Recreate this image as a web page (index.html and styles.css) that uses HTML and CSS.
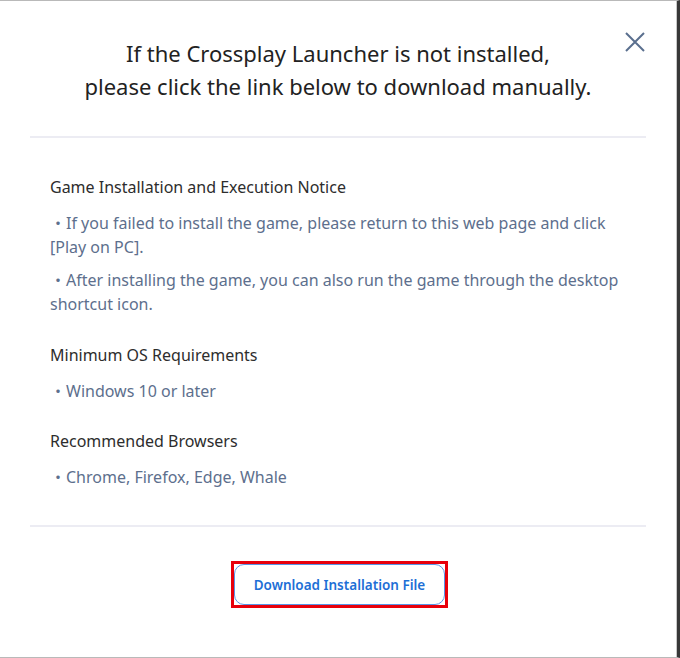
FILE: index.html
```html
<!DOCTYPE html>
<html lang="en">
<head>
<meta charset="utf-8">
<title>Download</title>
<link rel="stylesheet" href="styles.css">
</head>
<body>
<div class="frame">
  <div class="modal">
    <button class="close" aria-label="Close">
      <svg width="20" height="20" viewBox="0 0 20 20"><path d="M1 1 L19 19 M19 1 L1 19" stroke="#5a6f8e" stroke-width="2" fill="none"/></svg>
    </button>
    <h1 class="title">If the Crossplay Launcher is not installed,<br>please click the link below to download manually.</h1>
    <hr class="divider">
    <div class="content">
      <section class="section">
        <h2 class="heading">Game Installation and Execution Notice</h2>
        <p class="item">・If you failed to install the game, please return to this web page and click [Play on PC].</p>
        <p class="item">・After installing the game, you can also run the game through the desktop shortcut icon.</p>
      </section>
      <section class="section section-wide">
        <h2 class="heading">Minimum OS Requirements</h2>
        <p class="item">・Windows 10 or later</p>
      </section>
      <section class="section">
        <h2 class="heading">Recommended Browsers</h2>
        <p class="item">・Chrome, Firefox, Edge, Whale</p>
      </section>
    </div>
    <hr class="divider">
    <div class="actions">
      <div class="focus-ring">
        <button class="download">Download Installation File</button>
      </div>
    </div>
  </div>
</div>
</body>
</html>
```
FILE: styles.css
```css
* { box-sizing: border-box; }
html, body { margin: 0; padding: 0; background: #fff; }
body { font-family: "Noto Sans", "Noto Sans CJK SC", sans-serif; }
.frame {
  width: 680px;
  height: 658px;
  border-top: 1px solid #b9b9b9;
  border-bottom: 1px solid #b9b9b9;
  border-right: 3px solid #383838;
  box-shadow: inset -1px 0 0 #c8c8c8;
  overflow: hidden;
}
.modal {
  position: relative;
  padding: 36px 31px 0 30px;
}
.close {
  position: absolute;
  top: 31px;
  right: 32px;
  width: 20px;
  height: 20px;
  padding: 0;
  border: 0;
  background: none;
  display: flex;
}
.title {
  margin: 0;
  font-size: 22px;
  font-weight: 400;
  line-height: 33px;
  text-align: center;
  color: #222;
}
.divider {
  margin: 33px 0 0;
  border: 0;
  height: 2px;
  background: #ececf3;
}
.content {
  padding: 37px 20px 0;
}
.section + .section-wide { margin-top: 27px; }
.section-wide + .section { margin-top: 26px; }
.heading {
  margin: 0;
  font-size: 16px;
  font-weight: 400;
  line-height: 24px;
  color: #2d2d2d;
}
.item {
  margin: 12px 0 0;
  font-size: 16px;
  line-height: 24px;
  color: #5d6f8d;
}
.item + .item { margin-top: 9px; }
.content + .divider { margin-top: 36px; }
.actions {
  display: flex;
  justify-content: center;
  padding: 34px 0 0 3px;
}
.focus-ring {
  border: 3px solid #e8000b;
  display: flex;
}
.download {
  width: 211px;
  height: 41px;
  border: 1px solid #5a95e6;
  border-radius: 10px;
  background: #fff;
  font-family: "Noto Sans", sans-serif;
  font-size: 13.5px;
  font-weight: 600;
  color: #1d6fd6;
  padding: 0;
}
```
